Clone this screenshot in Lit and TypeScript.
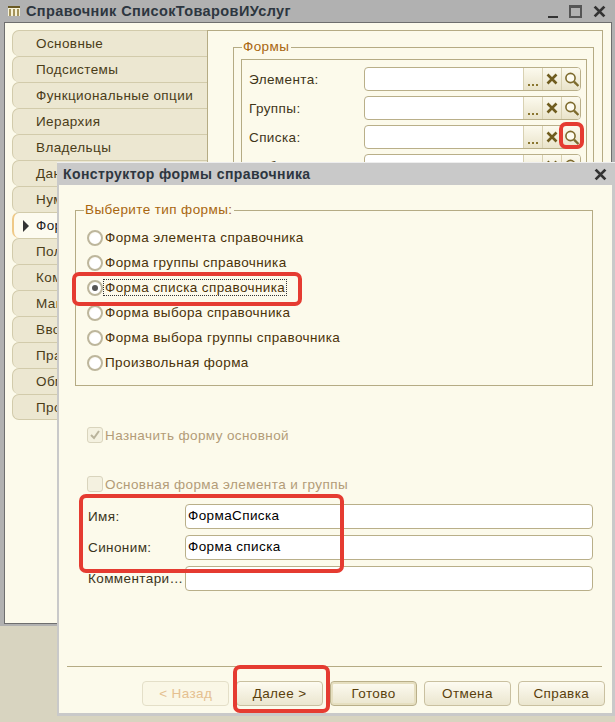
import { LitElement, html, css, svg } from "lit";
import { customElement, state } from "lit/decorators.js";

const tabs = [
  "Основные",
  "Подсистемы",
  "Функциональные опции",
  "Иерархия",
  "Владельцы",
  "Данные",
  "Нумерация",
  "Формы",
  "Поле ввода",
  "Команды",
  "Макеты",
  "Ввод на основании",
  "Права",
  "Обмен данными",
  "Прочее",
];

const formFields = ["Элемента:", "Группы:", "Списка:", "Выбора:"];

const formTypes = [
  "Форма элемента справочника",
  "Форма группы справочника",
  "Форма списка справочника",
  "Форма выбора справочника",
  "Форма выбора группы справочника",
  "Произвольная форма",
];

const closeIcon = (size: number, color: string) => html`
  <svg width=${size} height=${size} viewBox="0 0 12 12">
    <path d="M1.5 1.5l9 9M10.5 1.5l-9 9" stroke=${color} stroke-width="2.6" fill="none" />
  </svg>
`;

const searchIcon = svg`
  <circle cx="6.5" cy="6" r="4.6" fill="#fdfbf0" stroke="#7d6a2c" stroke-width="1.6" />
  <path d="M10 9.6l4.4 4.4" stroke="#7d6a2c" stroke-width="2.4" />
`;

@customElement("app-root")
export class AppRoot extends LitElement {
  @state() selectedType = 2;

  renderLookup() {
    return html`
      <div class="lookup">
        <div class="lookup-text"></div>
        <div class="lookup-btn dots"><i></i><i></i><i></i></div>
        <div class="lookup-btn">${closeIcon(12, "#6f5c1e")}</div>
        <div class="lookup-btn">
          <svg width="15" height="15" viewBox="0 0 15 15">${searchIcon}</svg>
        </div>
      </div>
    `;
  }

  renderBackWindow() {
    return html`
      <div class="window">
        <div class="titlebar">
          <svg class="app-icon" width="14" height="12" viewBox="0 0 14 12">
            <rect x="1" y="1" width="12" height="10" fill="#f7f2d8" />
            <rect x="1" y="1" width="12" height="2" fill="#6b5a24" />
            <path d="M3 4v7M7 4v7M11 4v7" stroke="#8b7632" stroke-width="1.5" />
          </svg>
          <span class="window-title">Справочник СписокТоваровИУслуг</span>
          <div class="window-controls">
            <span class="minimize"></span>
            <span class="maximize"></span>
            ${closeIcon(13, "#333")}
          </div>
        </div>
        <div class="window-body">
          <div class="tabs">
            ${tabs.map(
              (t) => html`
                <div class="tab ${t === "Формы" ? "active" : ""}">
                  ${t === "Формы" ? html`<span class="marker"></span>` : ""}${t}
                </div>
              `,
            )}
          </div>
          <div class="panel">
            <fieldset class="forms-group">
              <legend>Формы</legend>
              <div class="forms-inner">
                ${formFields.map(
                  (f) => html`
                    <div class="forms-row">
                      <span class="forms-label">${f}</span>
                      ${this.renderLookup()}
                    </div>
                  `,
                )}
              </div>
            </fieldset>
          </div>
        </div>
      </div>
    `;
  }

  renderDialog() {
    return html`
      <div class="dialog">
        <div class="dialog-title">
          <span>Конструктор формы справочника</span>
          ${closeIcon(13, "#333")}
        </div>
        <div class="dialog-body">
          <fieldset class="type-group">
            <legend>Выберите тип формы:</legend>
            ${formTypes.map(
              (t, i) => html`
                <div class="radio-row" @click=${() => (this.selectedType = i)}>
                  <span class="radio ${i === this.selectedType ? "checked" : ""}"></span>
                  <span class="radio-text ${i === this.selectedType ? "focused" : ""}">${t}</span>
                </div>
              `,
            )}
          </fieldset>

          <div class="check-row first">
            <span class="check">
              <svg width="12" height="12" viewBox="0 0 12 12">
                <path d="M2 6l3 3 5-7" stroke="#b9b39b" stroke-width="2" fill="none" />
              </svg>
            </span>
            Назначить форму основной
          </div>
          <div class="check-row second">
            <span class="check"></span>
            Основная форма элемента и группы
          </div>

          <div class="name-rows">
            <div class="name-row">
              <label>Имя:</label><input value="ФормаСписка" />
            </div>
            <div class="name-row">
              <label>Синоним:</label><input value="Форма списка" />
            </div>
            <div class="name-row">
              <label>Комментари…</label><input value="" />
            </div>
          </div>

          <div class="footer">
            <div class="divider"></div>
            <div class="buttons">
              <button disabled>&lt; Назад</button>
              <button>Далее &gt;</button>
              <button class="default">Готово</button>
              <button>Отмена</button>
              <button>Справка</button>
            </div>
          </div>
        </div>
      </div>
    `;
  }

  render() {
    return html`
      ${this.renderBackWindow()} ${this.renderDialog()}
      <div class="mark mark-search"></div>
      <div class="mark mark-radio"></div>
      <div class="mark mark-names"></div>
      <div class="mark mark-next"></div>
    `;
  }

  static styles = css`
    :host {
      display: block;
      position: relative;
      width: 615px;
      height: 722px;
      overflow: hidden;
      background: #d8d4c0;
      font-family: "Liberation Sans", Arial, sans-serif;
      font-size: 13.5px;
      letter-spacing: 0.4px;
      color: #3f3519;
    }
    * {
      box-sizing: border-box;
    }

    /* окно справочника */
    .window {
      height: 626px;
      display: flex;
      flex-direction: column;
      background: #b1b1b1;
      padding: 0 3px 2px 4px;
    }
    .titlebar {
      height: 22px;
      flex: none;
      display: flex;
      align-items: center;
      gap: 5px;
      padding: 0 6px 0 3px;
    }
    .app-icon {
      flex: none;
    }
    .window-title {
      font-size: 14.5px;
      font-weight: bold;
      letter-spacing: 0.4px;
      color: #2d3640;
    }
    .window-controls {
      margin-left: auto;
      display: flex;
      align-items: center;
      gap: 11px;
    }
    .minimize {
      width: 10px;
      height: 2px;
      margin-top: 12px;
      background: #333;
    }
    .maximize {
      width: 13px;
      height: 13px;
      border: 2px solid #555;
      border-top-width: 3px;
    }
    .window-body {
      flex: 1;
      min-height: 0;
      display: flex;
      background: #fcfaeb;
      border: 1px solid #6e6e6e;
      padding: 7px 8px 8px 7px;
    }
    .tabs {
      width: 195px;
      flex: none;
    }
    .tab {
      height: 26px;
      display: flex;
      align-items: center;
      padding-left: 23px;
      background: #ece7d1;
      border: 1px solid #d2cbab;
      border-right: 0;
      border-bottom-width: 0;
      border-radius: 7px 0 0 7px;
      color: #4a3c18;
      white-space: nowrap;
    }
    .tab:last-child {
      border-bottom-width: 1px;
    }
    .tab.active {
      position: relative;
      background: #fdfbf0;
      border-left: 2px solid #efc987;
      padding-left: 22px;
      color: #222;
    }
    .marker {
      position: absolute;
      left: 9px;
      top: 7px;
      border-left: 6px solid #333;
      border-top: 6px solid transparent;
      border-bottom: 6px solid transparent;
    }
    .panel {
      flex: 1;
      border: 1px solid #b5ab84;
      padding: 8px 8px 8px 25px;
    }
    .forms-group,
    .type-group {
      margin: 0;
      min-width: 0;
      border: 1px solid #b5ab84;
    }
    legend {
      height: 16px;
      line-height: 16px;
      padding: 0 2px 0 1px;
      color: #a8660f;
    }
    .forms-group {
      padding: 4px 6px 8px 7px;
      height: 100%;
    }
    .forms-group legend {
      margin-left: 1px;
    }
    .forms-inner {
      height: 100%;
      border: 1px solid #b5ab84;
      padding: 7px 5px 0 7px;
      display: flex;
      flex-direction: column;
      gap: 5px;
    }
    .forms-row {
      height: 24px;
      display: flex;
      align-items: center;
    }
    .forms-label {
      width: 115px;
      flex: none;
    }
    .lookup {
      flex: 1;
      height: 24px;
      display: flex;
      background: #fff;
      border: 1px solid #b9af89;
      border-radius: 4px;
      overflow: hidden;
    }
    .lookup-text {
      flex: 1;
    }
    .lookup-btn {
      width: 19px;
      flex: none;
      display: flex;
      align-items: center;
      justify-content: center;
      background: linear-gradient(#fcfaee, #e9e3ca);
      border-left: 1px solid #d8d1b2;
    }
    .lookup-btn.dots {
      align-items: flex-end;
      gap: 2px;
      padding-bottom: 4px;
    }
    .dots i {
      width: 2px;
      height: 2px;
      background: #8a7630;
    }

    /* диалог конструктора */
    .dialog {
      position: absolute;
      left: 57px;
      top: 162px;
      width: 558px;
      height: 554px;
      display: flex;
      flex-direction: column;
      background: #c9c9c9;
      border-top: 1px solid #eee;
      padding: 0 3px 3px 2px;
    }
    .dialog-title {
      height: 22px;
      flex: none;
      display: flex;
      align-items: center;
      justify-content: space-between;
      padding: 0 5px 0 4px;
      font-size: 14px;
      font-weight: bold;
      letter-spacing: 0.42px;
      color: #2d3640;
    }
    .dialog-body {
      flex: 1;
      min-height: 0;
      display: flex;
      flex-direction: column;
      background: #fcfaeb;
      padding: 17px 19px 7px 16px;
    }
    .type-group {
      padding: 7px 10px 10px 11px;
    }
    .type-group legend {
      margin-left: -3px;
    }
    .radio-row {
      height: 25px;
      display: flex;
      align-items: center;
      gap: 1px;
      color: #4a3208;
    }
    .radio {
      position: relative;
      width: 16px;
      height: 16px;
      flex: none;
      border-radius: 50%;
      border: 2px solid #bdb69c;
      background: radial-gradient(circle at 60% 60%, #fff 55%, #f0ecd9);
    }
    .radio.checked::after {
      content: "";
      position: absolute;
      left: 3px;
      top: 3px;
      width: 6px;
      height: 6px;
      border-radius: 50%;
      background: #555;
    }
    .radio-text {
      padding: 0 1px;
      line-height: 15px;
      outline: 1px solid transparent;
    }
    .radio-text.focused {
      outline: 1px dotted #333;
    }
    .check-row {
      height: 24px;
      display: flex;
      align-items: center;
      gap: 2px;
      padding-left: 12px;
      color: #b39c78;
    }
    .check-row.first {
      margin-top: 37px;
    }
    .check-row.second {
      margin-top: 25px;
    }
    .check {
      width: 16px;
      height: 16px;
      flex: none;
      display: flex;
      align-items: center;
      justify-content: center;
      border: 1px solid #d9d4bd;
      border-radius: 3px;
      background: #f4f1e0;
    }
    .name-rows {
      margin-top: 8px;
      display: flex;
      flex-direction: column;
      gap: 6px;
    }
    .name-row {
      height: 25px;
      display: flex;
      align-items: center;
      padding-left: 13px;
    }
    .name-row label {
      width: 97px;
      flex: none;
      white-space: nowrap;
      color: #3a3420;
    }
    .name-row input {
      flex: 1;
      min-width: 0;
      height: 25px;
      padding: 0 2px 2px;
      border: 1px solid #b9af89;
      border-radius: 4px;
      background: #fff;
      outline: none;
      font: inherit;
      letter-spacing: inherit;
      color: #000;
    }
    .footer {
      margin-top: auto;
    }
    .divider {
      height: 1px;
      margin: 0 -9px 14px -8px;
      background: #b5ab84;
    }
    .buttons {
      display: flex;
      justify-content: flex-end;
      gap: 6.5px;
      margin-right: -12px;
    }
    button {
      width: 87.4px;
      height: 25px;
      padding: 0;
      border: 1px solid #c9c0a0;
      border-radius: 4px;
      background: linear-gradient(#fdfbf1, #ebe6cf);
      font: inherit;
      letter-spacing: inherit;
      color: #5a3f0c;
    }
    button:disabled {
      background: #faf7e6;
      border-color: #e4dfc8;
      color: #e5c090;
    }
    button.default {
      border-color: #b9af89;
      box-shadow: inset 0 0 0 2px #e6dfc0;
    }

    /* красные пометки поверх снимка */
    .mark {
      position: absolute;
      border: 4px solid #e53b31;
      border-radius: 7px;
      pointer-events: none;
    }
    .mark-search {
      left: 559px;
      top: 122px;
      width: 25px;
      height: 27px;
    }
    .mark-radio {
      left: 72px;
      top: 272px;
      width: 230px;
      height: 34px;
    }
    .mark-names {
      left: 79px;
      top: 494px;
      width: 265px;
      height: 79px;
    }
    .mark-next {
      left: 233px;
      top: 665px;
      width: 97px;
      height: 48px;
    }
  `;
}

declare global {
  interface HTMLElementTagNameMap {
    "app-root": AppRoot;
  }
}
